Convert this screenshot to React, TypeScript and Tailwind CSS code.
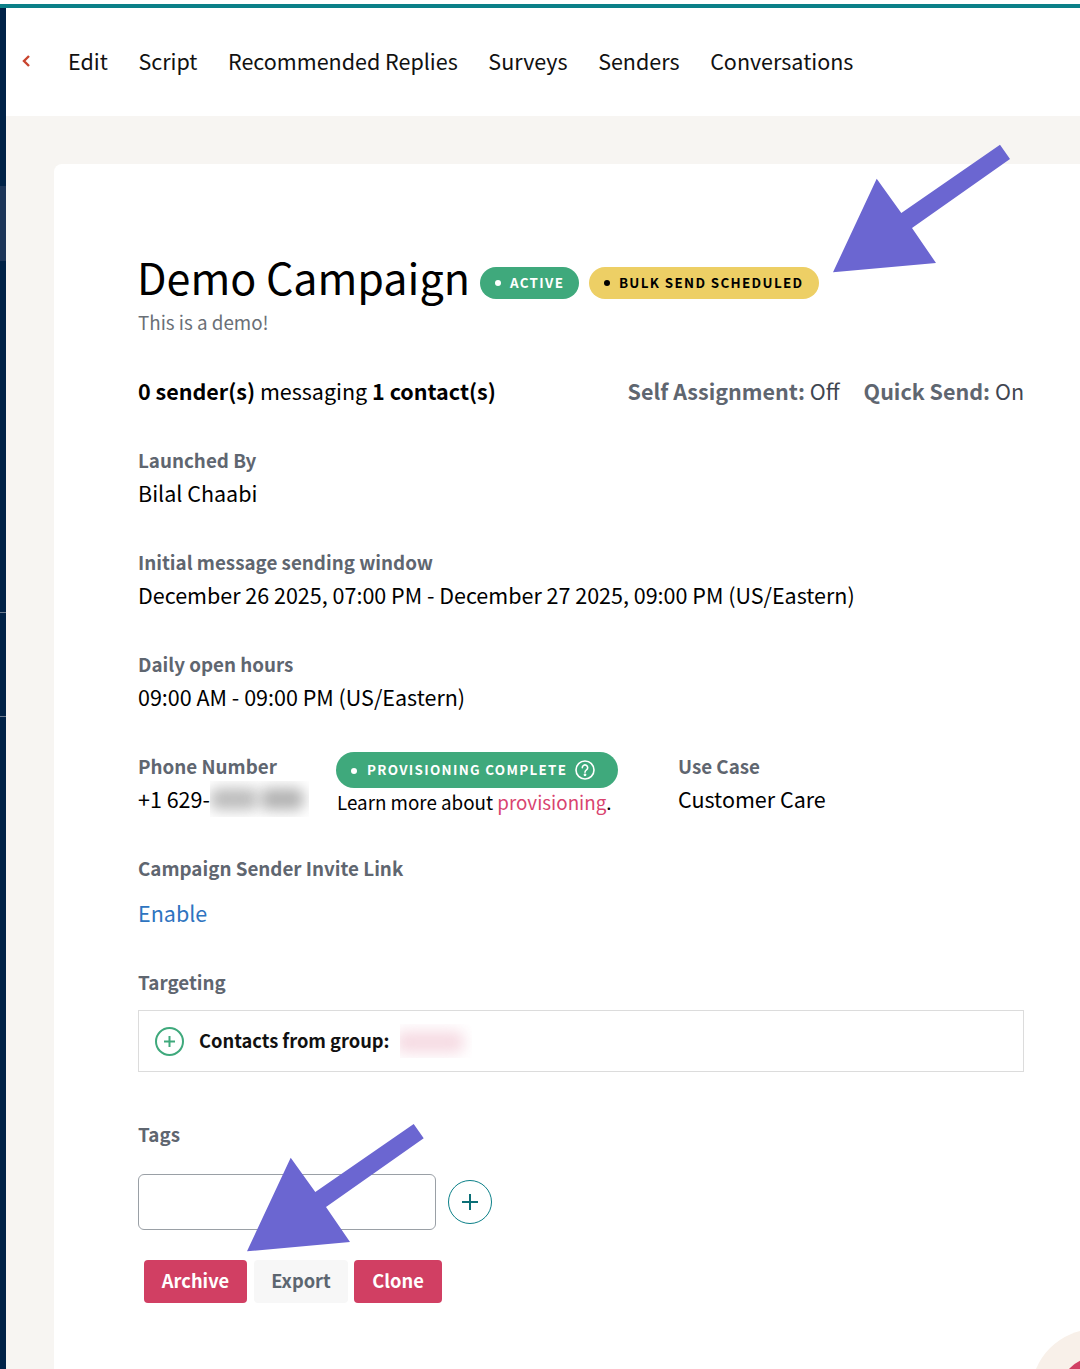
import React from "react";

const font = { fontFamily: '"Noto Sans CJK SC", "Noto Sans", sans-serif' };

function Field({ label, value, className = "" }: { label: string; value: string; className?: string }) {
  return (
    <div className={className}>
      <div className="h-[26px] text-[18.8px] leading-[26px] font-bold text-[#5f6670]">{label}</div>
      <div className="mt-[4px] h-[32px] text-[21.5px] leading-[32px] text-black">{value}</div>
    </div>
  );
}

function Dot({ className }: { className: string }) {
  return <span className={`mt-[1px] inline-block h-[6px] w-[6px] shrink-0 rounded-full ${className}`} />;
}

function Arrows() {
  return (
    <svg className="pointer-events-none absolute top-0 left-0" width="1080" height="1369" viewBox="0 0 1080 1369">
      <polygon
        fill="#6b66d1"
        points="1000,144.7 1010,159 912,228 936,263 833,272.3 876.7,178.7 901.3,213"
      />
      <polygon
        fill="#6b66d1"
        points="413.7,1124 423.7,1138.3 326,1207 350,1242 247,1251.3 290.7,1157.7 315.3,1192"
      />
    </svg>
  );
}

export default function App() {
  return (
    <div style={font} className="relative h-[1369px] w-[1080px] overflow-hidden bg-white">
      <div className="mt-[4px] h-[4px] bg-[#0b8088]" />
      <div className="flex h-[1361px]">
        <aside className="flex w-[6px] shrink-0 flex-col bg-[#002247]">
          <div className="mt-[178px] h-[75px] bg-[#1c3558]" />
          <div className="mt-[351px] h-px bg-[#6b7a8f]" />
          <div className="mt-[103px] h-px bg-[#6b7a8f]" />
        </aside>
        <div className="flex min-w-0 flex-1 flex-col">
          <nav className="flex h-[108px] shrink-0 items-center whitespace-nowrap bg-white pb-[2px] text-[21.5px] text-[#111]">
            <svg className="mr-[37px] ml-[15px]" width="10" height="14" viewBox="0 0 10 14" fill="none">
              <path d="M8 2 L3 7 L8 12" stroke="#c9452f" strokeWidth="2.4" />
            </svg>
            <div className="flex gap-[30.6px]">
              <span>Edit</span>
              <span>Script</span>
              <span>Recommended Replies</span>
              <span>Surveys</span>
              <span>Senders</span>
              <span>Conversations</span>
            </div>
          </nav>
          <main className="flex-1 bg-[#f7f5f2] pt-[48px] pl-[48px]">
            <section className="h-full rounded-tl-[8px] bg-white pt-[90px] pr-[56px] pl-[84px]">
              <div className="flex h-[52px] items-center whitespace-nowrap">
                <h1 className="-mt-[9px] -ml-px text-[43px] leading-[52px] font-normal text-black">Demo Campaign</h1>
                <span className="mt-[6px] ml-[10px] flex h-[32px] w-[99px] items-center rounded-full bg-[#3fa97c] pb-[2px] pl-[15px] text-[13.4px] font-bold tracking-[1.35px] text-white">
                  <Dot className="mr-[9px] bg-white" />ACTIVE
                </span>
                <span className="mt-[6px] ml-[10px] flex h-[32px] w-[230px] items-center rounded-full bg-[#edcf65] pb-[2px] pl-[15px] text-[13.4px] font-bold tracking-[1.35px] text-black">
                  <Dot className="mr-[9px] bg-black" />BULK SEND SCHEDULED
                </span>
              </div>
              <p className="mt-[2px] h-[28px] text-[18.8px] leading-[28px] text-[#6a6f76]">This is a demo!</p>
              <div className="mt-[39px] flex h-[32px] items-center justify-between text-[21.5px] leading-[32px]">
                <div className="text-black">
                  <b>0 sender(s)</b> messaging <b>1 contact(s)</b>
                </div>
                <div className="flex gap-[24px] text-[#3f4650]">
                  <span><b className="text-[#5f6670]">Self Assignment:</b> Off</span>
                  <span><b className="text-[#5f6670]">Quick Send:</b> On</span>
                </div>
              </div>
              <Field className="mt-[40px]" label="Launched By" value="Bilal Chaabi" />
              <Field className="mt-[40px]" label="Initial message sending window" value="December 26 2025, 07:00 PM - December 27 2025, 09:00 PM (US/Eastern)" />
              <Field className="mt-[40px]" label="Daily open hours" value="09:00 AM - 09:00 PM (US/Eastern)" />
              <div className="mt-[40px] flex h-[62px]">
                <div className="w-[198px]">
                  <div className="h-[26px] text-[18.8px] leading-[26px] font-bold text-[#5f6670]">Phone Number</div>
                  <div className="mt-[4px] flex h-[32px] items-center whitespace-nowrap text-[21.5px] leading-[32px] text-black">
                    +1 629-
                    <span className="relative h-[36px] w-[99px] shrink-0 overflow-hidden bg-white">
                      <span className="absolute top-[7px] left-[0px] h-[22px] w-[48px] rounded-[8px] bg-[#bcbcbc] blur-[7px]" />
                      <span className="absolute top-[7px] left-[50px] h-[22px] w-[44px] rounded-[8px] bg-[#b2b2b2] blur-[7px]" />
                    </span>
                  </div>
                </div>
                <div className="w-[342px]">
                  <div className="-mt-[1px] flex h-[36px] w-[282px] items-center whitespace-nowrap rounded-full bg-[#3fa97c] pl-[15px] text-[13.4px] font-bold tracking-[1.32px] text-white">
                    <Dot className="mr-[10px] -mt-[1px] bg-white" /><span className="-mt-[2px]">PROVISIONING COMPLETE</span>
                    <svg className="ml-[8px]" width="20" height="20" viewBox="0 0 20 20" fill="none" stroke="#fff" strokeWidth="1.6">
                      <circle cx="10" cy="10" r="9" />
                      <path d="M7.3 7.7a2.7 2.7 0 1 1 4.2 2.2c-1 .7-1.5 1.1-1.5 2.3" strokeLinecap="round" />
                      <circle cx="10" cy="14.8" r=".6" fill="#fff" />
                    </svg>
                  </div>
                  <p className="-mt-[1px] pl-[1px] text-[18.8px] leading-[30px] whitespace-nowrap text-black">
                    Learn more about <span className="text-[#d9436f]">provisioning</span>.
                  </p>
                </div>
                <Field label="Use Case" value="Customer Care" />
              </div>
              <div className="mt-[40px] h-[26px] text-[18.8px] leading-[26px] font-bold text-[#5f6670]">Campaign Sender Invite Link</div>
              <div className="mt-[15px] h-[34px] text-[21.5px] leading-[34px] text-[#2e74c0]">Enable</div>
              <div className="mt-[39px] h-[26px] text-[18.8px] leading-[26px] font-bold text-[#5f6670]">Targeting</div>
              <div className="mt-[15px] flex h-[62px] items-center border border-[#dcdcdc] pl-[16px]">
                <svg width="29" height="29" viewBox="0 0 29 29" fill="none" stroke="#3fa97c" strokeWidth="2">
                  <circle cx="14.5" cy="14.5" r="13.5" />
                  <path d="M14.5 9v11M9 14.5h11" />
                </svg>
                <b className="ml-[15px] text-[18.3px] font-bold text-[#111]">Contacts from group:</b>
                <span className="relative ml-[10px] h-[34px] w-[72px] overflow-hidden bg-white">
                  <span className="absolute top-[7px] left-[-4px] h-[22px] w-[68px] rounded-[8px] bg-[#f6dbe3] blur-[7px]" />
                </span>
              </div>
              <div className="mt-[49px] h-[26px] text-[18.8px] leading-[26px] font-bold text-[#5f6670]">Tags</div>
              <div className="mt-[27px] flex items-center">
                <input className="h-[56px] w-[298px] rounded-[6px] border border-[#9aa0a6] bg-white" />
                <button className="ml-[12px] flex h-[44px] w-[44px] items-center justify-center rounded-full border border-[#0b8088] bg-white">
                  <svg width="20" height="20" viewBox="0 0 20 20" fill="none" stroke="#0b6f76" strokeWidth="2">
                    <path d="M10 2v16M2 10h16" />
                  </svg>
                </button>
              </div>
              <div className="mt-[30px] ml-[6px] flex h-[43px] gap-[6px] text-[18.3px] font-bold">
                <button className="flex w-[103px] items-center justify-center rounded-[4px] bg-[#d13f63] pb-[2px] text-white">Archive</button>
                <button className="ml-px flex w-[94px] items-center justify-center rounded-[4px] bg-[#f7f7f7] pb-[2px] text-[#5c6670]">Export</button>
                <button className="flex w-[88px] items-center justify-center rounded-[4px] bg-[#d13f63] pb-[2px] text-white">Clone</button>
              </div>
            </section>
          </main>
        </div>
      </div>
      <div className="absolute top-[1329px] left-[1031px] flex h-[130px] w-[130px] items-center justify-center rounded-full bg-[#f8f0e9]">
        <div className="h-[75px] w-[75px] rounded-full bg-[#d13f63]" />
      </div>
      <Arrows />
    </div>
  );
}
